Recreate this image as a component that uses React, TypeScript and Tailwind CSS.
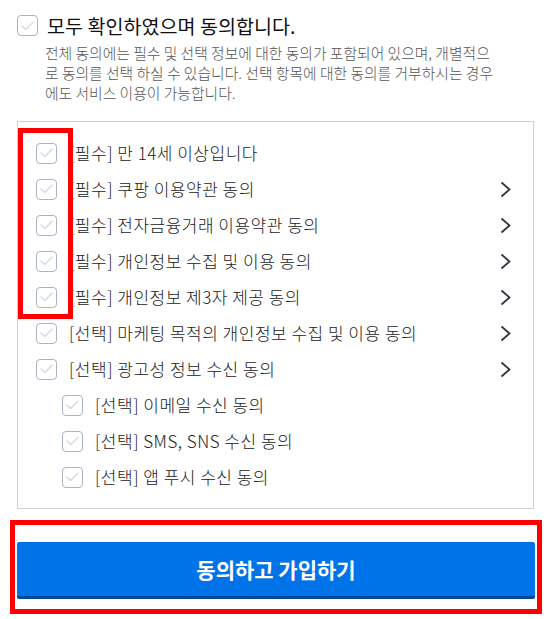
import React from "react";

const FONT = { fontFamily: '"Noto Sans CJK KR", "Noto Sans", sans-serif' };

// Unchecked-looking checkbox with a faint tick
const Check = () => (
  <span className="flex h-[21px] w-[21px] shrink-0 items-center justify-center rounded-[4px] border border-[#a9b3c1] bg-white">
    <svg width="13" height="10" viewBox="0 0 13 10" fill="none">
      <path d="M1 5l3.8 3.6L12 1.2" stroke="#d6dae0" strokeWidth="1.4" strokeLinecap="round" strokeLinejoin="round" />
    </svg>
  </span>
);

const Chevron = () => (
  <svg width="11" height="17" viewBox="0 0 11 17" fill="none">
    <path d="M1.5 1.5l8 7-8 7" stroke="#2f3640" strokeWidth="1.8" strokeLinejoin="miter" />
  </svg>
);

type Term = { label: string; sub?: boolean; link?: boolean };

const terms: Term[] = [
  { label: "[필수] 만 14세 이상입니다" },
  { label: "[필수] 쿠팡 이용약관 동의", link: true },
  { label: "[필수] 전자금융거래 이용약관 동의", link: true },
  { label: "[필수] 개인정보 수집 및 이용 동의", link: true },
  { label: "[필수] 개인정보 제3자 제공 동의", link: true },
  { label: "[선택] 마케팅 목적의 개인정보 수집 및 이용 동의", link: true },
  { label: "[선택] 광고성 정보 수신 동의", link: true },
  { label: "[선택] 이메일 수신 동의", sub: true },
  { label: "[선택] SMS, SNS 수신 동의", sub: true },
  { label: "[선택] 앱 푸시 수신 동의", sub: true },
];

export default function App() {
  return (
    <div className="relative h-[619px] w-[554px] overflow-hidden bg-white" style={FONT}>
      {/* agree-all header */}
      <div className="pl-[17px] pt-[15px]">
        <div className="flex h-[21px] items-center gap-[9px]">
          <Check />
          <span className="text-[19.6px] leading-[21px] text-[#111]">모두 확인하였으며 동의합니다.</span>
        </div>
        <p className="mt-[7px] w-[458px] pl-[28px] box-content text-[14.8px] font-light leading-[20px] text-[#555]">
          전체 동의에는 필수 및 선택 정보에 대한 동의가 포함되어 있으며, 개별적으로 동의를 선택 하실 수 있습니다. 선택 항목에 대한 동의를 거부하시는 경우에도 서비스 이용이 가능합니다.
        </p>
      </div>

      {/* individual terms */}
      <ul className="ml-[17px] mt-[18px] w-[517px] border border-[#cfcfcf] pb-[13px] pl-[18px] pr-[22px] pt-[13px]">
        {terms.map((t) => (
          <li key={t.label} className={`flex h-[36px] items-center justify-between ${t.sub ? "pl-[26px]" : ""}`}>
            <div className="flex items-center gap-[12px]">
              <Check />
              <span className="text-[17px] font-light tracking-[0.5px] leading-[36px] text-[#222]">{t.label}</span>
            </div>
            {t.link && <Chevron />}
          </li>
        ))}
      </ul>

      {/* submit */}
      <div className="ml-[17px] mt-[33px] w-[518px]">
        <button className="flex h-[57px] w-full items-center justify-center rounded-[2px] border-b-[3px] border-[#00489a] bg-[#0073e9] pt-[2px] text-[21px] font-bold text-white">
          동의하고 가입하기
        </button>
      </div>

      {/* highlight marks */}
      <div className="pointer-events-none absolute left-[18px] top-[128px] h-[191px] w-[55px] border-[5px] border-[#ff0000]" />
      <div className="pointer-events-none absolute left-[10px] top-[520px] h-[94px] w-[532px] border-[5px] border-[#ff0000]" />
    </div>
  );
}
